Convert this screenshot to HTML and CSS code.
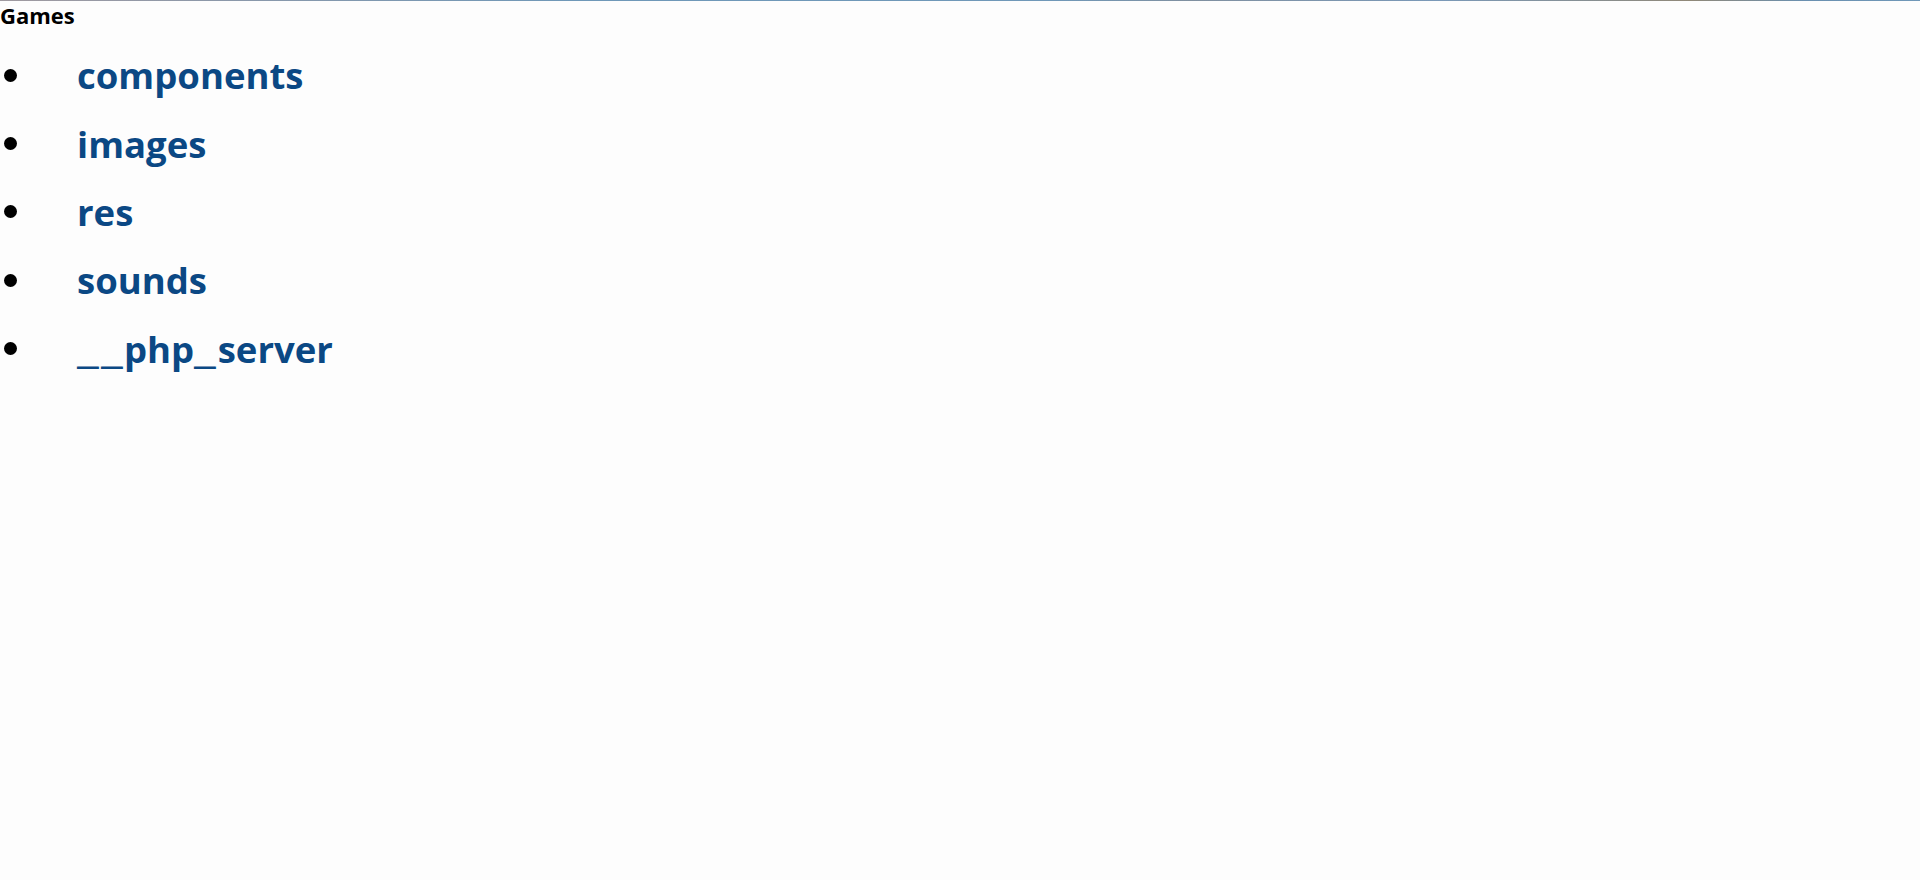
FILE: index.html
```html
<!DOCTYPE html>
<html lang="en">
<head>
<meta charset="utf-8">
<title>Games</title>
<link rel="stylesheet" href="styles.css">
</head>
<body>
<div class="top-strip"></div>
<h1 class="title">Games</h1>
<ul class="dir-list">
  <li class="dir-item"><a class="dir-link" href="#">components</a></li>
  <li class="dir-item"><a class="dir-link" href="#">images</a></li>
  <li class="dir-item"><a class="dir-link" href="#">res</a></li>
  <li class="dir-item"><a class="dir-link" href="#">sounds</a></li>
  <li class="dir-item"><a class="dir-link" href="#"><span class="us">_</span><span class="us">_</span>php<span class="us">_</span>server</a></li>
</ul>
</body>
</html>
```
FILE: styles.css
```css
html, body {
  margin: 0;
  padding: 0;
  background: #fdfdfd;
}
body {
  font-family: "Open Sans", "Liberation Sans", sans-serif;
  color: #000;
}
.top-strip {
  height: 1px;
  background: linear-gradient(90deg, #a09aa0 0%, #8e98a8 10%, #6f98b8 30%, #7098b8 55%, #8090a0 62%, #7a99b8 75%, #908878 88%, #6a90b0 94%, #7098b8 100%);
}
.title {
  margin: 0;
  font-size: 22px;
  font-weight: 700;
  line-height: 28px;
}
.dir-list {
  list-style: none;
  margin: 12px 0 0 0;
  padding: 0;
}
.dir-item {
  display: flex;
  align-items: center;
  height: 68.4px;
  font-size: 36.5px;
  font-weight: 700;
}
.dir-item::before {
  content: "";
  width: 13px;
  height: 13px;
  border-radius: 50%;
  background: #000;
  margin-left: 4px;
  margin-right: 60px;
  flex: none;
}
.dir-link {
  color: #0b4884;
  text-decoration: none;
}
.us {
  display: inline-block;
  width: 23.5px;
  transform: scaleX(1.45);
  transform-origin: left center;
}
```
